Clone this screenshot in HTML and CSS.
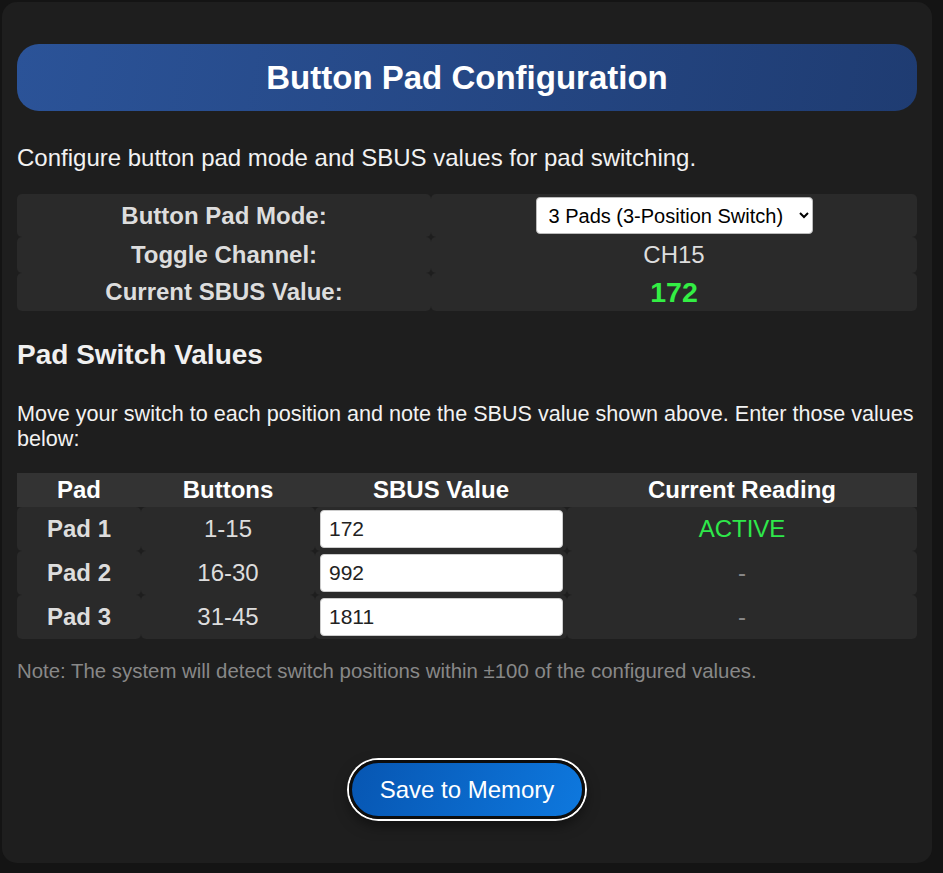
FILE: index.html
```html
<!DOCTYPE html>
<html lang="en">
<head>
<meta charset="utf-8">
<title>Button Pad Configuration</title>
<link rel="stylesheet" href="styles.css">
</head>
<body>
<div class="panel">
  <h1 class="title">Button Pad Configuration</h1>
  <p class="intro">Configure button pad mode and SBUS values for pad switching.</p>

  <table class="settings">
    <tr class="row-mode">
      <td class="label">Button Pad Mode:</td>
      <td class="value">
        <select class="mode-select">
          <option>3 Pads (3-Position Switch)</option>
        </select>
      </td>
    </tr>
    <tr class="row-plain">
      <td class="label">Toggle Channel:</td>
      <td class="value">CH15</td>
    </tr>
    <tr class="row-sbus">
      <td class="label">Current SBUS Value:</td>
      <td class="value sbus-live">172</td>
    </tr>
  </table>

  <h3 class="section">Pad Switch Values</h3>
  <p class="help">Move your switch to each position and note the SBUS value shown above. Enter those values below:</p>

  <table class="pads">
    <thead>
      <tr>
        <th class="c-pad">Pad</th>
        <th class="c-btn">Buttons</th>
        <th class="c-val">SBUS Value</th>
        <th class="c-read">Current Reading</th>
      </tr>
    </thead>
    <tbody>
      <tr>
        <td class="pad-name">Pad 1</td>
        <td>1-15</td>
        <td class="input-cell"><input class="val-input" type="text" value="172"></td>
        <td class="reading active">ACTIVE</td>
      </tr>
      <tr>
        <td class="pad-name">Pad 2</td>
        <td>16-30</td>
        <td class="input-cell"><input class="val-input" type="text" value="992"></td>
        <td class="reading idle">-</td>
      </tr>
      <tr>
        <td class="pad-name">Pad 3</td>
        <td>31-45</td>
        <td class="input-cell"><input class="val-input" type="text" value="1811"></td>
        <td class="reading idle">-</td>
      </tr>
    </tbody>
  </table>

  <p class="note">Note: The system will detect switch positions within ±100 of the configured values.</p>

  <div class="actions">
    <button class="save-btn" type="button">Save to Memory</button>
  </div>
</div>
</body>
</html>
```

FILE: styles.css
```css
* { box-sizing: border-box; }

html, body {
  margin: 0;
  background: #141414;
}

body {
  padding: 2px 11px 10px 2px;
  font-family: "Liberation Sans", Arial, sans-serif;
  color: #e8e8e8;
}

.panel {
  width: 930px;
  height: 861px;
  background: #1e1e1e;
  border-radius: 15px;
  padding: 42px 15px 0 15px;
}

.title {
  margin: 0;
  height: 67px;
  line-height: 67px;
  text-align: center;
  font-size: 33px;
  font-weight: bold;
  color: #ffffff;
  border-radius: 22px;
  background: linear-gradient(100deg, #2b5398 0%, #1f3c72 100%);
}

.intro {
  margin: 35px 0 0 0;
  font-size: 24px;
  line-height: 23px;
  color: #f2f2f2;
}

.settings {
  width: 100%;
  margin-top: 25px;
  border-collapse: separate;
  border-spacing: 0;
}

.settings td {
  background: #2a2a2a;
  border-radius: 5px;
  text-align: center;
  font-size: 24px;
  line-height: 26px;
  padding: 0 4px;
}

.settings .label {
  width: 46%;
  font-weight: bold;
  color: #dddddd;
}

.settings .value {
  color: #dddddd;
}

.row-mode td { height: 43px; }
.row-plain td { height: 36px; }
.row-sbus td { height: 38px; }

.mode-select {
  font-family: "Liberation Sans", Arial, sans-serif;
  font-size: 20px;
  width: 277px;
  height: 37px;
  padding: 0 4px 0 8px;
  color: #000;
  background: #fff;
  border: 1px solid #bbbbbb;
  border-radius: 4px;
  vertical-align: middle;
}

.settings td.sbus-live {
  font-weight: bold;
  font-size: 28.5px;
  line-height: 30px;
  color: #33ee44;
}

.section {
  margin: 30px 0 0 0;
  font-size: 28px;
  line-height: 28px;
  font-weight: bold;
  color: #f0f0f0;
}

.help {
  margin: 32px 0 0 0;
  font-size: 21.6px;
  line-height: 25px;
  color: #f2f2f2;
}

.pads {
  width: 100%;
  margin-top: 22px;
  border-collapse: separate;
  border-spacing: 0;
}

.pads th {
  background: #333333;
  color: #ffffff;
  font-size: 24px;
  line-height: 26px;
  font-weight: bold;
  height: 34px;
  padding: 0;
  text-align: center;
}

.c-pad { width: 124px; }
.c-btn { width: 174px; }
.c-val { width: 252px; }

.pads td {
  background: #2a2a2a;
  border-radius: 5px;
  height: 44px;
  text-align: center;
  font-size: 24px;
  line-height: 26px;
  color: #dddddd;
  padding: 0;
}

.pads td.pad-name {
  font-weight: bold;
}

.pads td.input-cell {
  padding: 0 4px 0 5px;
  text-align: left;
}

.val-input {
  width: 100%;
  height: 38px;
  font-family: "Liberation Sans", Arial, sans-serif;
  font-size: 21px;
  color: #222;
  background: #fff;
  border: 1px solid #cccccc;
  border-radius: 4px;
  padding: 0 8px;
  vertical-align: middle;
}

.pads td.active { color: #2ee84a; }
.pads td.idle { color: #888888; }

.note {
  margin: 22px 0 0 0;
  font-size: 20.4px;
  line-height: 21px;
  color: #888888;
}

.actions {
  display: flex;
  justify-content: center;
  margin-top: 78px;
}

.save-btn {
  width: 236px;
  height: 59px;
  border-radius: 30px;
  border: 3px solid #0d0d0d;
  box-shadow: 0 0 0 2px #ffffff, 0 6px 14px rgba(0, 0, 0, 0.5);
  background: linear-gradient(110deg, #0756b2 0%, #0e78de 100%);
  color: #ffffff;
  font-family: "Liberation Sans", Arial, sans-serif;
  font-size: 24px;
  cursor: pointer;
}
```
